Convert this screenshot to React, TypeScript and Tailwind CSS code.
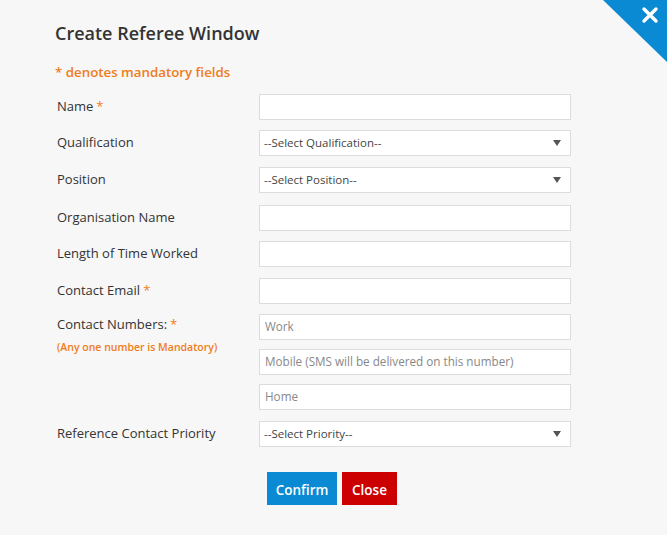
import React from "react";

const font = { fontFamily: '"Open Sans", "Noto Sans", sans-serif' };

function Label({ text, req }: { text: string; req?: boolean }) {
  return (
    <div className="w-[204px] shrink-0 pl-[2px] text-[13px] leading-[20px] text-[#333] mt-[-3px]">
      {text}
      {req && <span className="text-[#f07c1a] ml-[3px]">*</span>}
    </div>
  );
}

function Input({ placeholder }: { placeholder?: string }) {
  return (
    <div className="w-[312px] h-[26px] bg-white border border-[#dcdcdc] flex items-center px-[5px] text-[11.7px] text-[#888]">
      {placeholder}
    </div>
  );
}

function Select({ text }: { text: string }) {
  return (
    <div className="w-[312px] h-[26px] bg-white border border-[#dcdcdc] flex items-center justify-between pl-[4px] pr-[9px] text-[11.5px] text-[#444]">
      <span>{text}</span>
      <svg width="8" height="6" viewBox="0 0 8 6">
        <path d="M0 0 H8 L4 6 Z" fill="#555" />
      </svg>
    </div>
  );
}

function Row({ children, cls }: { children: React.ReactNode; cls?: string }) {
  return <div className={"flex items-center " + (cls ?? "")}>{children}</div>;
}

export default function App() {
  return (
    <div style={font} className="w-[670px] h-[535px] bg-white flex">
      <div className="relative w-[667px] h-[535px] bg-[#f7f7f7] overflow-hidden">
        <div className="absolute right-0 top-0 w-[64px] h-[62px]">
          <svg width="64" height="62" viewBox="0 0 64 62">
            <polygon points="0,0 64,0 64,62" fill="#0a8ad2" />
            <path d="M41 9 L53 21 M53 9 L41 21" stroke="#fff" strokeWidth="3.4" strokeLinecap="round" />
          </svg>
        </div>
        <div className="pl-[55px] pt-[21px]">
          <div className="text-[18px] font-semibold text-[#333] leading-[24px]">Create Referee Window</div>
          <div className="mt-[17px] text-[13.3px] font-semibold text-[#f07c1a] leading-[20px]">* denotes mandatory fields</div>
          <div className="mt-[12px] flex flex-col">
            <Row>
              <Label text="Name" req />
              <Input />
            </Row>
            <Row cls="mt-[10px]">
              <Label text="Qualification" />
              <Select text="--Select Qualification--" />
            </Row>
            <Row cls="mt-[11px]">
              <Label text="Position" />
              <Select text="--Select Position--" />
            </Row>
            <Row cls="mt-[12px]">
              <Label text="Organisation Name" />
              <Input />
            </Row>
            <Row cls="mt-[10px]">
              <Label text="Length of Time Worked" />
              <Input />
            </Row>
            <Row cls="mt-[11px]">
              <Label text="Contact Email" req />
              <Input />
            </Row>
            <div className="mt-[10px] flex">
              <div className="w-[204px] shrink-0 pl-[2px]">
                <div className="text-[13px] leading-[20px] text-[#333]">
                  Contact Numbers:<span className="text-[#f07c1a] ml-[3px]">*</span>
                </div>
                <div className="text-[10.5px] font-semibold leading-[16px] text-[#f07c1a] mt-[5px]">
                  (Any one number is Mandatory)
                </div>
              </div>
              <div className="flex flex-col gap-[9px]">
                <Input placeholder="Work" />
                <Input placeholder="Mobile (SMS will be delivered on this number)" />
                <Input placeholder="Home" />
              </div>
            </div>
            <Row cls="mt-[11px]">
              <Label text="Reference Contact Priority" />
              <Select text="--Select Priority--" />
            </Row>
          </div>
          <div className="mt-[25px] flex gap-[5px] pl-[212px]">
            <button className="w-[70px] h-[33px] pt-[3px] bg-[#0a8ad2] text-white text-[13.5px] font-semibold">Confirm</button>
            <button className="w-[55px] h-[33px] pt-[3px] bg-[#cc0000] text-white text-[13.5px] font-semibold">Close</button>
          </div>
        </div>
      </div>
    </div>
  );
}
